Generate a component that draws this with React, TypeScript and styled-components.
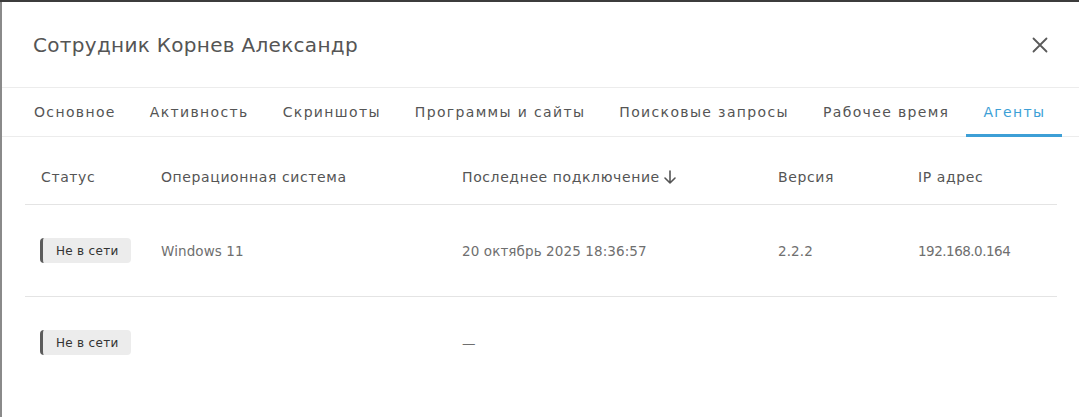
import React from 'react'
import styled, { createGlobalStyle } from 'styled-components'

const GlobalStyle = createGlobalStyle`
    html, body {
        margin: 0;
        padding: 0;
        background: #ffffff;
    }
    body {
        font-family: "DejaVu Sans", "Noto Sans", sans-serif;
    }
`

type Agent = {
    status: string
    os: string
    lastSeen: string
    version: string
    ip: string
}

const agents: Agent[] = [
    { status: 'Не в сети', os: 'Windows 11', lastSeen: '20 октябрь 2025 18:36:57', version: '2.2.2', ip: '192.168.0.164' },
    { status: 'Не в сети', os: '', lastSeen: '—', version: '', ip: '' },
]

const tabs = ['Основное', 'Активность', 'Скриншоты', 'Программы и сайты', 'Поисковые запросы', 'Рабочее время', 'Агенты']

export default function App() {
    return (
        <>
            <GlobalStyle />
            <Backdrop>
                <Modal>
                    <Header>
                        <Title>Сотрудник Корнев Александр</Title>
                        <CloseButton aria-label="Закрыть">
                            <svg width="16" height="16" viewBox="0 0 16 16" fill="none">
                                <path d="M1.5 1.5 14.5 14.5M14.5 1.5 1.5 14.5" stroke="#5a5a5a" strokeWidth="1.8" strokeLinecap="round" />
                            </svg>
                        </CloseButton>
                    </Header>
                    <Tabs>
                        {tabs.map((t) => (
                            <Tab key={t} active={t === 'Агенты'}>{t}</Tab>
                        ))}
                    </Tabs>
                    <Content>
                        <Table>
                            <HeadRow>
                                <Cell>Статус</Cell>
                                <Cell>Операционная система</Cell>
                                <Cell>
                                    Последнее подключение
                                    <SortIcon width="16" height="16" viewBox="0 0 16 16" fill="none">
                                        <path d="M8 2v12M3 9l5 5 5-5" stroke="#555" strokeWidth="1.6" strokeLinecap="round" strokeLinejoin="round" />
                                    </SortIcon>
                                </Cell>
                                <Cell>Версия</Cell>
                                <Cell>IP адрес</Cell>
                            </HeadRow>
                            {agents.map((a, i) => (
                                <BodyRow key={i}>
                                    <Cell><StatusBadge>{a.status}</StatusBadge></Cell>
                                    <Cell muted>{a.os}</Cell>
                                    <Cell muted>{a.lastSeen}</Cell>
                                    <Cell muted>{a.version}</Cell>
                                    <Cell muted tight>{a.ip}</Cell>
                                </BodyRow>
                            ))}
                        </Table>
                    </Content>
                </Modal>
            </Backdrop>
        </>
    )
}

const Backdrop = styled.div`
    background: #8a8a8a;
    border-top: 2px solid #3c3c3c;
    padding-left: 2px;
    height: 415px;
    overflow: hidden;
`

const Modal = styled.div`
    background: #ffffff;
    width: 1077px;
    height: 100%;
`

const Header = styled.div`
    display: flex;
    align-items: center;
    justify-content: space-between;
    height: 85px;
    padding: 0 31px 0 31px;
    border-bottom: 1px solid #ececec;
`

const Title = styled.h2`
    margin: 0;
    font-size: 20px;
    font-weight: 400;
    color: #555555;
    letter-spacing: 0.3px;
`

const CloseButton = styled.button`
    border: none;
    background: none;
    padding: 0;
    display: flex;
    cursor: pointer;
`

const Tabs = styled.div`
    display: flex;
    height: 48px;
    padding-left: 15px;
    border-bottom: 1px solid #ececec;
`

const Tab = styled.div<{ active?: boolean }>`
    display: flex;
    align-items: center;
    padding: 2px 17px 0;
    font-size: 14px;
    letter-spacing: 1.35px;
    color: ${(p) => (p.active ? '#3d9fd6' : '#555555')};
    border-bottom: 3px solid ${(p) => (p.active ? '#3d9fd6' : 'transparent')};
    margin-bottom: -1px;
    white-space: nowrap;
`

const Content = styled.div`
    padding: 13px 22px 0 23px;
`

const Table = styled.div`
    display: flex;
    flex-direction: column;
`

const HeadRow = styled.div`
    display: grid;
    grid-template-columns: 120px 301px 316px 140px 1fr;
    align-items: center;
    height: 54px;
    border-bottom: 1px solid #e4e4e4;
    font-size: 14px;
    letter-spacing: 0.6px;
    color: #555555;
`

const BodyRow = styled(HeadRow)`
    height: 91px;
    font-size: 13.5px;
    letter-spacing: 0.1px;
    &:last-child {
        border-bottom: none;
    }
`

const Cell = styled.div<{ muted?: boolean; tight?: boolean }>`
    display: flex;
    align-items: center;
    padding-left: 16px;
    color: ${(p) => (p.muted ? '#6f6f6f' : 'inherit')};
    letter-spacing: ${(p) => (p.tight ? '-0.5px' : 'inherit')};
    white-space: nowrap;
`

const SortIcon = styled.svg`
    margin-left: 2px;
`

const StatusBadge = styled.span`
    display: inline-flex;
    align-items: center;
    height: 25px;
    padding: 0 12px 0 13px;
    margin-left: -1px;
    background: #ececec;
    border-left: 3px solid #5c5c5c;
    border-radius: 4px;
    font-size: 12px;
    color: #333333;
    letter-spacing: 0.3px;
`
